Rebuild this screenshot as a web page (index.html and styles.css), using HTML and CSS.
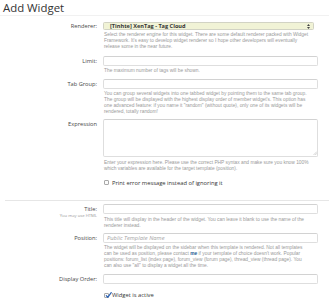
FILE: index.html
```html
<!DOCTYPE html>
<html>
<head>
<meta charset="utf-8">
<title>Add Widget</title>
<link rel="stylesheet" href="styles.css">
</head>
<body>
<div class="page">
  <h1 class="heading">Add Widget</h1>
  <form class="form">
    <div class="row row-first">
      <label class="lbl lbl-select">Renderer:</label>
      <div class="ctrl">
        <div class="select">
          <span class="select-text">[Tinhte] XenTag - Tag Cloud</span>
          <svg class="select-arrows" width="3" height="5" viewBox="0 0 3 5"><path d="M1.5 0 L3 2 L0 2 Z M1.5 5 L3 3 L0 3 Z" fill="#444"/></svg>
        </div>
        <p class="explain">Select the renderer engine for this widget. There are some default renderer packed with Widget<br>Framework. It's easy to develop widget renderer so I hope other developers will eventually<br>release some in the near future.</p>
      </div>
    </div>

    <div class="row">
      <label class="lbl">Limit:</label>
      <div class="ctrl">
        <input class="txt" type="text">
        <p class="explain">The maximum number of tags will be shown.</p>
      </div>
    </div>

    <div class="row">
      <label class="lbl">Tab Group:</label>
      <div class="ctrl">
        <input class="txt" type="text">
        <p class="explain">You can group several widgets into one tabbed widget by pointing them to the same tab group.<br>The group will be displayed with the highest display order of member widget's. This option has<br>one advanced feature: if you name it "random" (without quote), only one of its widgets will be<br>rendered, totally random!</p>
      </div>
    </div>

    <div class="row">
      <label class="lbl">Expression</label>
      <div class="ctrl">
        <div class="ta-wrap">
          <textarea class="ta"></textarea>
          <svg class="grip" width="4" height="4" viewBox="0 0 4 4"><path d="M0.5 4 L4 0.5 M2.2 4 L4 2.2" stroke="#aaa" stroke-width="0.5"/></svg>
        </div>
        <p class="explain explain-ta">Enter your expression here. Please use the correct PHP syntax and make sure you know 100%<br>which variables are available for the target template (position).</p>
        <label class="check check-print">
          <span class="box"></span>
          <span class="check-text">Print error message instead of ignoring it</span>
        </label>
      </div>
    </div>

    <hr class="sep">

    <div class="row">
      <div class="lbl-wrap">
        <label class="lbl">Title:</label>
        <span class="hint">You may use HTML</span>
      </div>
      <div class="ctrl">
        <input class="txt" type="text">
        <p class="explain">This title will display in the header of the widget. You can leave it blank to use the name of the<br>renderer instead.</p>
      </div>
    </div>

    <div class="row">
      <label class="lbl">Position:</label>
      <div class="ctrl">
        <input class="txt" type="text" placeholder="Public Template Name">
        <p class="explain">The widget will be displayed on the sidebar when this template is rendered. Not all templates<br>can be used as position, please contact <a class="link" href="#">me</a> if your template of choice doesn't work. Popular<br>positions: forum_list (index page), forum_view (forum page), thread_view (thread page). You<br>can also use "all" to display a widget all the time.</p>
      </div>
    </div>

    <div class="row">
      <label class="lbl">Display Order:</label>
      <div class="ctrl">
        <input class="txt" type="text">
        <label class="check check-active">
          <span class="box box-checked">
            <svg width="7" height="7" viewBox="0 0 7 7"><path d="M1.3 3.6 L2.8 5.3 L6.2 0.6" fill="none" stroke="#2b62b5" stroke-width="1.2" stroke-linecap="round" stroke-linejoin="round"/></svg>
          </span>
          <span class="check-text">Widget is active</span>
        </label>
      </div>
    </div>
  </form>
</div>
</body>
</html>
```

FILE: styles.css
```css
html, body {
  margin: 0;
  padding: 0;
  background: #ffffff;
}

body {
  font-family: "Open Sans", "Liberation Sans", sans-serif;
  color: #333;
  width: 329px;
  overflow: hidden;
}

.heading {
  margin: 0;
  padding: 1px 0 0 3px;
  height: 14px;
  line-height: 14px;
  font-size: 11.4px;
  font-weight: normal;
  color: #333;
  border-bottom: 1px solid #f1f1f1;
}

.form {
  padding-top: 6px;
}

.row {
  display: grid;
  grid-template-columns: 97px 215px;
  column-gap: 6px;
  margin-bottom: 4.5px;
}

.row-first {
  margin-bottom: 5.5px;
}

.lbl {
  display: block;
  text-align: right;
  font-size: 5.7px;
  line-height: 10px;
  height: 10px;
  color: #484848;
}

.lbl-select {
  line-height: 8px;
  height: 8px;
}

.lbl-wrap {
  display: flex;
  flex-direction: column;
  align-items: flex-end;
}

.hint {
  display: block;
  font-size: 4.2px;
  line-height: 4px;
  color: #999;
}

.ctrl {
  display: flex;
  flex-direction: column;
  align-items: flex-start;
  min-width: 0;
}

.select {
  box-sizing: border-box;
  width: 211px;
  height: 8px;
  display: flex;
  align-items: center;
  justify-content: space-between;
  padding: 0 3px 0 6px;
  background: #f1f3d6;
  border: 1px solid #d2d3c4;
  border-radius: 1.5px;
}

.select-text {
  font-size: 5.6px;
  font-weight: bold;
  color: #333;
  line-height: 6px;
  white-space: nowrap;
}

.select-arrows {
  display: block;
}

.txt {
  box-sizing: border-box;
  width: 215px;
  height: 10px;
  margin: 0;
  padding: 0 3px;
  border: 1px solid #dedede;
  border-top-color: #d2d2d2;
  border-radius: 2px;
  background: #fff;
  font-family: "Open Sans", "Liberation Sans", sans-serif;
  font-size: 5.8px;
  outline: none;
}

.txt::placeholder {
  color: #a5a5a5;
  font-style: italic;
}

.ta-wrap {
  position: relative;
  width: 215px;
  height: 37.5px;
}

.ta {
  display: block;
  box-sizing: border-box;
  width: 215px;
  height: 37.5px;
  margin: 0;
  padding: 2px 3px;
  border: 1px solid #dedede;
  border-top-color: #d2d2d2;
  border-radius: 2px;
  resize: none;
  background: #fff;
  outline: none;
}

.grip {
  position: absolute;
  right: 1.5px;
  bottom: 1.5px;
  display: block;
}

.explain {
  margin: 2.3px 0 0 1px;
  font-family: "Liberation Sans", "Open Sans", sans-serif;
  font-size: 4.85px;
  line-height: 6px;
  color: #9a9a9a;
  white-space: nowrap;
}

.explain-ta {
  margin-top: 3.5px;
}

.link {
  color: #1f5b93;
  font-weight: bold;
  text-decoration: none;
}

.check {
  display: flex;
  align-items: center;
  height: 8px;
  padding-left: 1px;
}

.check-print {
  margin-top: 6.5px;
}

.check-active {
  margin-top: 7.3px;
}

.box {
  position: relative;
  box-sizing: border-box;
  width: 5px;
  height: 5px;
  border: 0.7px solid #a9a9a9;
  border-radius: 1px;
  background: #fbfbfb;
  margin-right: 3px;
}

.box svg {
  position: absolute;
  left: -0.5px;
  top: -1.8px;
  display: block;
}

.check-text {
  font-size: 5.8px;
  line-height: 8px;
  color: #333;
}

.sep {
  margin: 13px 0 3.5px 5px;
  height: 0;
  border: 0;
  border-top: 1px solid #e6e6e6;
}
```
